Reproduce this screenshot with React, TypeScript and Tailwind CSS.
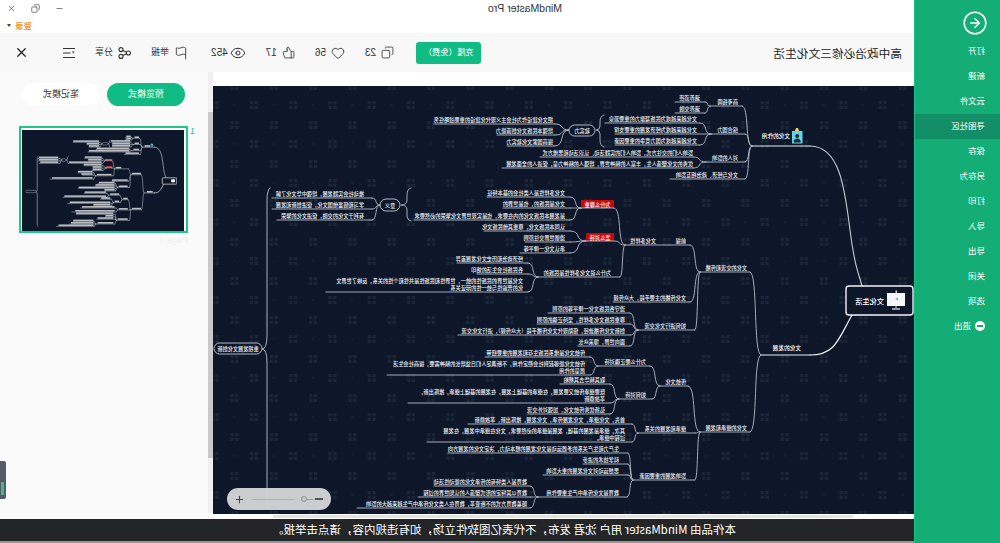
import React from "react";
import { X, Copy, Minus, Plus, Heart, ThumbsUp, Eye, Flag, CircleArrowLeft } from "lucide-react";

type Node = [number, number, number, string, number?, number?];

// Node: underline from x1 to x2 at height y, label text ending at tr, optional lift of a main label (read from the picture)
const nodes: Node[] = [
  [752, 810, 146, "文化的作用", 790, 6],
  [710, 742, 106, "高考指南", 738],
  [675, 705, 102, "涵养道德", 700],
  [675, 705, 113, "涵养交融", 700],
  [711, 745, 134, "综合国力", 738],
  [605, 700, 123, "文化越来越成为民族凝聚力的重要源泉", 697],
  [615, 711, 134, "文化越来越成为经济发展的重要支撑", 697],
  [615, 700, 145, "文化越来越成为国力竞争的重要因素", 697],
  [434, 555, 124, "把文化建设作为社会主义现代化建设的重要战略任务", 553],
  [497, 555, 135, "增强本民族文化创造能力", 553],
  [507, 555, 146, "提高国家文化软实力", 553],
  [706, 745, 162, "对人的影响", 738],
  [540, 693, 157, "影响人们的交往方式，影响人们的实践活动、认识活动和思维方式", 693],
  [502, 693, 168, "优秀的文化塑造人生，丰富人的精神世界，增强人的精神力量，促进人的全面发展", 693],
  [670, 745, 179, "文化与经济、政治相互影响", 738],
  [761, 810, 355, "文化的发展", 801, 3],
  [700, 750, 272, "文化的交流和传播", 747],
  [700, 750, 432, "文化的继承和发展", 747],
  [625, 690, 245, "文化多样性", 656],
  [538, 620, 277, "为什么说文化多样性是民族的", 611],
  [487, 570, 197, "文化多样性是人类社会的基本特征", 565],
  [503, 570, 208, "文化是民族的，也是世界的", 565],
  [414, 570, 220, "是发展本民族文化的内在要求，也是实现世界文化繁荣的必然要求", 565],
  [484, 570, 231, "认同本民族文化，尊重其他民族文化", 565],
  [525, 570, 242, "遵循世界交往原则", 565],
  [520, 570, 253, "承认文化一律平等", 565],
  [457, 528, 263, "经济政治和历史文化发展差异", 523],
  [477, 528, 274, "各民族社会生活的烙印", 523],
  [326, 528, 292, "文化是世界的民族性的统一，世界性和民族性是共性和个性的关系，反映了世界文\n化的普遍性与统一性的辩证关系", 523],
  [272, 372, 198, "推动社会实践发展，增强中华文化了解", 364],
  [272, 372, 209, "学习和借鉴他国文化，促进创新和发展", 364],
  [277, 372, 220, "有利于文化的交融，促进文化的繁荣", 364],
  [613, 690, 302, "文化传播的主要手段，大众传媒", 686],
  [638, 695, 330, "如何进行文化交流", 686],
  [548, 630, 313, "遵守各民族文化一律平等的原则", 625],
  [537, 630, 324, "尊重民族文化多样性，坚持正确的原则", 625],
  [458, 630, 335, "创新文化传播途径，借助现代文化传播手段（大众传媒），进行文化交流", 625],
  [578, 630, 346, "面向世界，博采众长", 625],
  [660, 688, 386, "传统文化", 686],
  [598, 650, 366, "为什么要正确对待", 646],
  [485, 590, 357, "传统文化是维系民族生存和发展的重要纽带", 585],
  [387, 590, 375, "传统文化能够起到社会稳定作用，不断满足人们日益增长的精神需要，提高社会生活\n质量的作用", 585],
  [619, 652, 399, "如何对待", 646],
  [560, 610, 384, "取其精华去其糟粕", 605],
  [408, 610, 403, "既要继承传统又要发展，在继承的基础上发展，在发展的基础上继承，推陈出新，\n革故鼎新", 605],
  [528, 610, 414, "弘扬优秀传统文化，加强对外交流", 605],
  [638, 695, 433, "继承和发展的关系", 686],
  [468, 632, 424, "首先，文化继承，文化发展传承，文化发展，推陈出新，革故鼎新", 625],
  [427, 632, 442, "其次，继承是发展的基础，发展是继承的必然要求，文化在继承中发展，在发展\n过程中继承。", 625],
  [633, 695, 480, "影响发展的重要因素", 686],
  [448, 628, 453, "生产力和生产关系的矛盾运动是文化发展的根本动力，决定文化的发展方向", 619],
  [583, 628, 464, "科学技术的进步", 619],
  [543, 628, 475, "思想运动对文化发展的重大影响", 619],
  [538, 627, 497, "教育是文化传承中产生重要作用", 619],
  [434, 530, 486, "教育是人类特有的传承文化的能动性活动", 527],
  [418, 530, 497, "教育以其特定的形式塑造人的认知世界的过程", 527],
  [357, 530, 508, "随着教育方式的不断变革，教育在人类文化传承中产生越来越大的影响", 527],
];

const extraLabels: Node[] = [[676, 686, 245, "前提", 686]];

const links: number[][] = [
  [705, 102, 710, 106], [705, 113, 710, 106], [742, 106, 752, 146], [745, 134, 752, 146], [745, 162, 752, 146], [745, 179, 752, 146],
  [700, 123, 711, 134], [700, 145, 711, 134], [555, 124, 569, 130], [555, 135, 569, 130], [555, 146, 569, 130],
  [693, 157, 706, 162], [693, 168, 706, 162], [750, 272, 761, 355], [750, 432, 761, 355], [690, 245, 700, 272],
  [614, 208, 625, 245], [614, 241, 625, 245], [620, 277, 625, 245], [570, 197, 581, 208], [570, 208, 581, 208], [570, 220, 581, 208],
  [570, 231, 586, 241], [570, 242, 586, 241], [570, 253, 586, 241], [528, 263, 538, 277], [528, 274, 538, 277], [528, 292, 538, 277],
  [372, 198, 380, 205], [372, 209, 380, 205], [372, 220, 380, 205], [690, 302, 700, 272], [695, 330, 700, 272],
  [630, 313, 638, 330], [630, 324, 638, 330], [630, 335, 638, 330], [630, 346, 638, 330], [688, 386, 700, 432], [650, 366, 660, 386],
  [590, 357, 598, 366], [590, 375, 598, 366], [652, 399, 660, 386], [610, 384, 619, 399], [610, 403, 619, 399], [610, 414, 619, 399],
  [695, 433, 700, 432], [632, 424, 638, 433], [632, 442, 638, 433], [695, 480, 700, 432], [628, 453, 633, 480], [628, 464, 633, 480],
  [628, 475, 633, 480], [627, 497, 633, 480], [530, 486, 538, 497], [530, 497, 538, 497], [530, 508, 538, 497],
];

const curve = ([a, b, c, d]: number[]) => {
  const m = Math.abs(c - a) * 0.75;
  return `M${a} ${b}C${a + m} ${b} ${c - m} ${d} ${c} ${d}`;
};

const ovals: [number, number, number, number, string][] = [
  [569, 595, 125, 136, "软实力"],
  [380, 400, 199, 211, "意义"],
  [214, 262, 343, 354, "重视发展文化创新"],
];

const reds: [number, number, number, number, string][] = [
  [581, 614, 200, 208, "为什么尊重"],
  [586, 614, 233, 241, "怎么对待"],
];

const widest = (t: string) => Math.max(...t.split("\n").map((l) => l.length)) * 5.2;

function MindMap({ thumb = false }: { thumb?: boolean }) {
  const line = thumb ? 2.6 : 0.9;
  return (
    <div className="relative w-[701px] h-[428px] overflow-hidden font-['Noto_Sans_CJK_SC',sans-serif] font-medium text-[5.2px] leading-[7px] text-[#f0f2f5]">
      <svg className="absolute inset-0 block" width={701} height={428} viewBox="0 0 701 428" fill="none">
        <defs>
          <pattern id="dots" patternUnits="userSpaceOnUse" x="814" y="95" width="39.3" height="39">
            <g fill="#1b2638">
              <rect x="25.3" y="6" width="3.2" height="3.2" /><rect x="30.1" y="6" width="3.2" height="3.2" />
              <rect x="25.3" y="10.8" width="3.2" height="3.2" /><rect x="30.1" y="10.8" width="3.2" height="3.2" />
              <rect x="6" y="26" width="3.2" height="3.2" /><rect x="10.8" y="26" width="3.2" height="3.2" />
              <rect x="6" y="30.8" width="3.2" height="3.2" /><rect x="10.8" y="30.8" width="3.2" height="3.2" />
              <rect x="9.2" y="9.2" width="1.4" height="1.4" />
            </g>
          </pattern>
        </defs>
        <g transform="matrix(-1 0 0 1 914 -86)">
          {!thumb && <rect x="213" y="86" width="701" height="428" fill="url(#dots)" />}
          <g stroke="#b4bbc6" strokeWidth={line} strokeLinecap="round">
            {nodes.map((n, i) => (
              <path key={i} d={`M${n[0]} ${n[2]}H${n[1]}`} stroke={n[5] ? "#e8ebef" : undefined} strokeWidth={n[5] && !thumb ? 1.2 : undefined} />
            ))}
            {links.map((l, i) => <path key={i} d={curve(l)} />)}
            <path d="M810 146C840 146 845 190 850 230S858 270 862 286" stroke="#c3c9d2" strokeWidth={thumb ? 3 : 1.1} />
            <path d="M810 355C835 355 838 340 852 315" stroke="#eef0f3" strokeWidth={thumb ? 3 : 1.2} />
            <path d="M604 115Q600 116 600 122V126Q600 130 596 130Q600 130 600 134V140Q600 146 604 147" />
            <path d="M411 188Q407 189 407 195V200Q407 205 401 205Q407 205 407 210V215Q407 220 411 221" />
            <path d="M270 188Q267 190 267 200V335Q267 349 262 349Q267 349 267 363V500Q267 506 270 508" strokeWidth={thumb ? 3 : 1} stroke="#aab1bc" />
          </g>
          {ovals.map((o, i) => (
            <rect key={i} x={o[0]} y={o[2]} width={o[1] - o[0]} height={o[3] - o[2]} rx={(o[3] - o[2]) / 2} fill="#0d1729" stroke="#c3c9d3" strokeWidth={thumb ? 2 : 0.9} />
          ))}
          {thumb &&
            nodes.map((n, i) => (
              <rect key={i} x={(n[4] ?? n[1]) - widest(n[3])} y={n[2] - 9} width={widest(n[3])} height={7} fill="#ffffff" opacity={0.72} />
            ))}
          {reds.map((r, i) => (
            <rect key={i} x={r[0]} y={r[2]} width={r[1] - r[0]} height={r[3] - r[2]} fill={thumb ? "#ff3b3f" : "#c40a0f"} />
          ))}
          <path d="M614 208H581" stroke="#b4bbc6" strokeWidth={line} />
          <path d="M614 241H586" stroke="#b4bbc6" strokeWidth={line} />
          {/* root node */}
          <rect x="846" y="286" width="67" height="29" rx="3" fill="#0d1729" stroke="#f2f3f5" strokeWidth={thumb ? 3 : 1.4} />
          <path d="M895.5 290.5h1.5v2.5h-1.5z" fill="#d8dce2" />
          <rect x="887" y="293" width="18" height="13" fill="#f5f6f8" />
          <path d="M898 297.5v3l-2.6-1.5z" fill="#39b8e6" />
          <path d="M896 306v2" stroke="#c9ced6" strokeWidth="1" />
          <path d="M892 309h8" stroke="#c9ced6" strokeWidth="1.4" />
          {/* badge icon of 文化的作用 */}
          <rect x="792" y="131" width="10.5" height="12.5" fill="#5fd5e6" />
          <path d="M795 131l1-3h2l1 3z" fill="#f6d36b" />
          <circle cx="797.2" cy="136" r="2" fill="#1c2b3a" />
          <path d="M793.6 142.5c0-3 1.6-4 3.6-4s3.6 1 3.6 4z" fill="#1c2b3a" />
        </g>
      </svg>
      {!thumb && (
        <>
          {[...nodes, ...extraLabels].map((n, i) => (
            <div
              key={i}
              className={`absolute whitespace-pre ${n[5] ? "text-[5.7px] text-white" : ""}`}
              style={{ left: 914 - (n[4] ?? n[1]), bottom: 428 - (n[2] - 86) + 1 + (n[5] ?? 0) }}
            >
              {n[3]}
            </div>
          ))}
          {ovals.map((o, i) => (
            <div key={i} className="absolute flex items-center justify-center" style={{ left: 914 - o[1], top: o[2] - 86, width: o[1] - o[0], height: o[3] - o[2] }}>
              {o[4]}
            </div>
          ))}
          {reds.map((r, i) => (
            <div key={i} className="absolute flex items-center justify-center text-white" style={{ left: 914 - r[1], top: r[2] - 86, width: r[1] - r[0], height: r[3] - r[2] }}>
              {r[4]}
            </div>
          ))}
          <div className="absolute left-[30px] top-[209px] text-[7.2px] leading-[12px] text-white">文化生活</div>
        </>
      )}
    </div>
  );
}

const menu = ["打开", "新建", "云文件", "寻图社区", "保存", "另存为", "打印", "导入", "导出", "关闭", "选项"];

export default function App() {
  return (
    <div className="w-[1000px] h-[543px] overflow-hidden -scale-x-100 flex bg-white font-['Liberation_Sans','Noto_Sans_CJK_SC',sans-serif]">
      {/* green menu */}
      <aside className="w-[86px] shrink-0 h-full bg-[#14ad75] border-r border-[#19c085] text-white text-[8.5px] flex flex-col">
        <div className="h-[38.5px] pl-[12px] pt-[10px]">
          <CircleArrowLeft size={26} strokeWidth={1.4} />
        </div>
        {menu.map((m) => (
          <div key={m} className={`h-[25px] shrink-0 pl-[15px] flex items-center ${m === "寻图社区" ? "bg-[#128f66]" : ""}`}>{m}</div>
        ))}
        <div className="h-[25px] pl-[15px] flex items-center gap-[4px]">
          <span className="w-[10px] h-[10px] rounded-full bg-white flex items-center justify-center">
            <span className="w-[6px] h-[1.5px] bg-[#14ad75]" />
          </span>
          退出
        </div>
      </aside>

      <div className="flex-1 min-w-0 flex flex-col">
        {/* window bars */}
        <header className="h-[33px] bg-white relative text-[#333] shrink-0">
          <div className="pl-[352px] pt-[2px] text-[10.5px] leading-[13px]">MindMaster Pro</div>
          <div className="absolute right-[7px] top-[4px] flex items-center gap-[15px] text-[#555]">
            <Minus size={9} />
            <Copy size={9} />
            <X size={9} />
          </div>
          <div className="absolute right-[7px] top-[19px] flex items-center gap-[4px] text-[8.5px] leading-[13px] font-medium text-[#ff8a1c] font-['Noto_Sans_CJK_SC',sans-serif]">
            登录
            <span className="w-0 h-0 border-x-[2.5px] border-x-transparent border-t-[3px] border-t-[#444]" />
          </div>
        </header>

        {/* toolbar */}
        <div className="h-[39px] shrink-0 bg-[#f8f8f8] flex items-center pl-[12px] pr-[14px] text-[9px] text-[#333]">
          <h1 className="flex-1 text-[11.7px] font-normal text-[#222] font-['Noto_Sans_CJK_SC',sans-serif]">高中政治必修三文化生活</h1>
          <button className="w-[65px] h-[22px] rounded-[3px] bg-[#10bc83] text-white text-[8.3px] mr-[22px]">克隆（免费）</button>
          <div className="flex items-center gap-[20px]">
            <div className="flex items-center gap-[5px] text-[10px]"><Copy size={13} strokeWidth={1.5} /><span>23</span></div>
            <div className="flex items-center gap-[5px] text-[10px]"><Heart size={14} strokeWidth={1.5} /><span>56</span></div>
            <div className="flex items-center gap-[5px] text-[10px]"><ThumbsUp size={13} strokeWidth={1.5} /><span>17</span></div>
            <div className="flex items-center gap-[2px] text-[10px] mr-[3px]"><Eye size={16} strokeWidth={1.5} /><span>452</span></div>
            <div className="flex items-center gap-[5px]"><Flag size={14} strokeWidth={1.5} /><span>举报</span></div>
            <div className="flex items-center gap-[5px]">
              <svg width="13" height="12" viewBox="0 0 13 12" fill="none" stroke="#333" strokeWidth="1.1">
                <circle cx="2.6" cy="6" r="2" />
                <circle cx="10" cy="2.6" r="2" />
                <circle cx="10" cy="9.4" r="2" />
                <path d="M4.4 5.2l3.8-1.8M4.4 6.8l3.8 1.8" />
              </svg>
              <span>分享</span>
            </div>
            <svg width="12" height="12" viewBox="0 0 12 12" fill="none" stroke="#333" strokeWidth="1.2">
              <path d="M0 1.5h12M4.5 6H12M0 10.5h12" />
              <path d="M0.5 4.6h2.6L1.8 6.6z" fill="#333" stroke="none" />
            </svg>
          </div>
          <X size={15} strokeWidth={2} className="ml-[34px] text-[#222]" />
        </div>

        {/* body */}
        <div className="flex-1 min-h-0 flex">
          <div className="w-[701px] shrink-0 flex flex-col bg-white">
            <div className="h-[14px]" />
            <div className="relative bg-[#0d1729]">
              <MindMap />
              <div className="absolute left-[583px] top-[402px] w-[104px] h-[22px] rounded-full bg-[#d6d7da]/95 flex items-center pl-[8px] pr-[7px] text-[#444]">
                <span className="w-[8px] h-[1.5px] bg-[#555] shrink-0" />
                <span className="w-[6px] h-px bg-[#999] ml-[2px] shrink-0" />
                <span className="w-[6px] h-[6px] rounded-full border border-[#8d8f92] shrink-0" />
                <span className="flex-1 h-px bg-[#aeb0b3] mx-[7px]" />
                <Plus size={11} strokeWidth={2.2} className="text-[#444]" />
              </div>
            </div>
            <div className="h-[5px] py-px">
              <div className="ml-[61px] w-[580px] h-full bg-[#dfe5e3]" />
            </div>
          </div>

          <div className="w-[5px] shrink-0 h-[441px] bg-[#f0f0f0]">
            <div className="mt-[40px] h-[346px] bg-[#c9c9c9]" />
          </div>

          <div className="flex-1 bg-[#fafafa] relative text-[9px]">
            <div className="flex gap-[7px] pl-[23px] pt-[11px]">
              <button className="w-[78px] h-[23px] rounded-full bg-[#10bc83] text-white">预览模式</button>
              <button className="w-[78px] h-[23px] rounded-full bg-white text-[#333]">笔记模式</button>
            </div>
            <div className="ml-[20px] mt-[20px] w-[169px] h-[107px] border-2 border-[#1fc58a] bg-white p-[1.5px] overflow-hidden">
              <div className="w-[162px] h-[101px] bg-[#0d1729] overflow-hidden pl-[7px] pt-[4px]">
                <div className="origin-top-left scale-x-[0.216] scale-y-[0.219]">
                  <MindMap thumb />
                </div>
              </div>
            </div>
            <div className="ml-[20px] mt-[1px] text-[9px] text-[#efefef]">Page-1</div>
            <div className="absolute left-[13px] top-[53px] text-[9px] text-[#1fc58a]">1</div>
            <div className="absolute right-0 top-[389px] w-[6px] h-[38px] rounded-l-[2px] bg-[#555c68] flex items-end justify-center pb-[4px]">
              <span className="w-[3px] h-[13px] bg-[#3fb98f]" />
            </div>
          </div>
        </div>

        {/* footer */}
        <footer className="h-[24px] shrink-0 bg-[#232526] border-b-2 border-[#8f9a96] flex items-center justify-center text-white text-[11.5px]">
          <span className="relative right-[47px] font-['Noto_Sans_CJK_SC',sans-serif]">本作品由 MindMaster 用户 沈君 发布，不代表亿图软件立场，如有违规内容，请点击举报。</span>
        </footer>
      </div>
    </div>
  );
}
